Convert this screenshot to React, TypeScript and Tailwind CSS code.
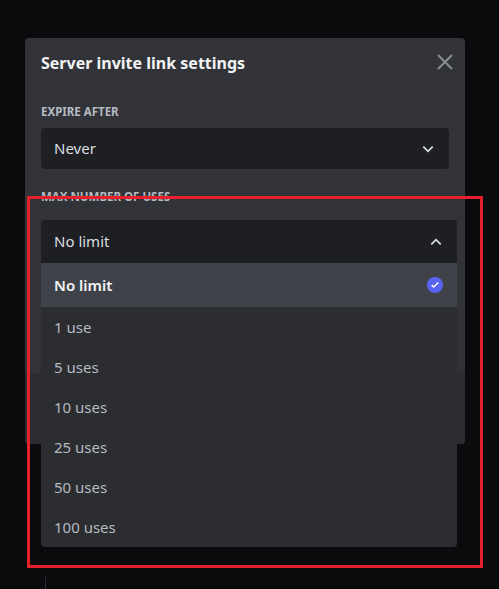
import React from "react";

const opts = ["1 use", "5 uses", "10 uses", "25 uses", "50 uses", "100 uses"];

export default function App() {
  return (
    <div className="relative w-[499px] h-[589px] bg-[#0a0b0d] overflow-hidden" style={{ fontFamily: "'Noto Sans', 'Open Sans', sans-serif" }}>
      <div className="absolute left-[25px] top-[38px] w-[440px] h-[406px] rounded-[4px] bg-[#313338] overflow-hidden flex flex-col">
        <div className="flex items-start justify-between px-4 pt-[13px]">
          <div className="text-[16px] font-bold text-[#f2f3f5] leading-[24px]">Server invite link settings</div>
          <svg width="24" height="24" viewBox="0 0 24 24" className="mt-[-1px] mr-[-8px]"><path d="M5 5L19 19M19 5L5 19" stroke="#8a8d93" strokeWidth="2" /></svg>
        </div>
        <div className="px-4 pt-[29px]">
          <div className="text-[11.5px] font-bold text-[#b5bac1] leading-[16px]">EXPIRE AFTER</div>
          <div className="mt-[8px] h-[41px] rounded-[4px] bg-[#1e1f22] flex items-center justify-between pl-[13px] pr-[14px]">
            <span className="text-[15px] text-[#dbdee1]">Never</span>
            <svg width="14" height="14" viewBox="0 0 24 24"><path d="M4 8l8 8 8-8" stroke="#dbdee1" strokeWidth="3" fill="none" /></svg>
          </div>
          <div className="mt-[20px] text-[11.5px] font-bold text-[#b5bac1] leading-[16px]">MAX NUMBER OF USES</div>
        </div>
        <div className="flex-1" />
        <div className="h-[71px] bg-[#2b2d31]" />
      </div>
      <div className="absolute left-[41px] top-[220px] w-[416px]">
        <div className="h-[43px] rounded-t-[4px] bg-[#1e1f22] flex items-center justify-between pl-[13px] pr-[14px]">
          <span className="text-[15px] text-[#dbdee1]">No limit</span>
          <svg width="14" height="14" viewBox="0 0 24 24"><path d="M4 16l8-8 8 8" stroke="#dbdee1" strokeWidth="3" fill="none" /></svg>
        </div>
        <div className="bg-[#2b2d31] rounded-b-[4px] overflow-hidden">
          <div className="h-[44px] bg-[#404249] flex items-center justify-between pl-[13px] pr-[14px]">
            <span className="text-[15px] font-semibold text-[#f2f3f5]">No limit</span>
            <div className="w-[16px] h-[16px] rounded-full bg-[#5865f2] flex items-center justify-center">
              <svg width="10" height="10" viewBox="0 0 24 24"><path d="M4 12l5 5 11-11" stroke="white" strokeWidth="3.5" fill="none" /></svg>
            </div>
          </div>
          {opts.map((o) => (
            <div key={o} className="h-[40px] flex items-center pl-[13px] text-[15px] text-[#b5bac1]">{o}</div>
          ))}
        </div>
      </div>
      <div className="absolute left-[27px] top-[196px] w-[456px] h-[372px] border-[3px] border-[#e5202a]" />
      <div className="absolute left-[45px] top-[577px] w-px h-[12px] bg-[#2a2d33]" />
    </div>
  );
}
